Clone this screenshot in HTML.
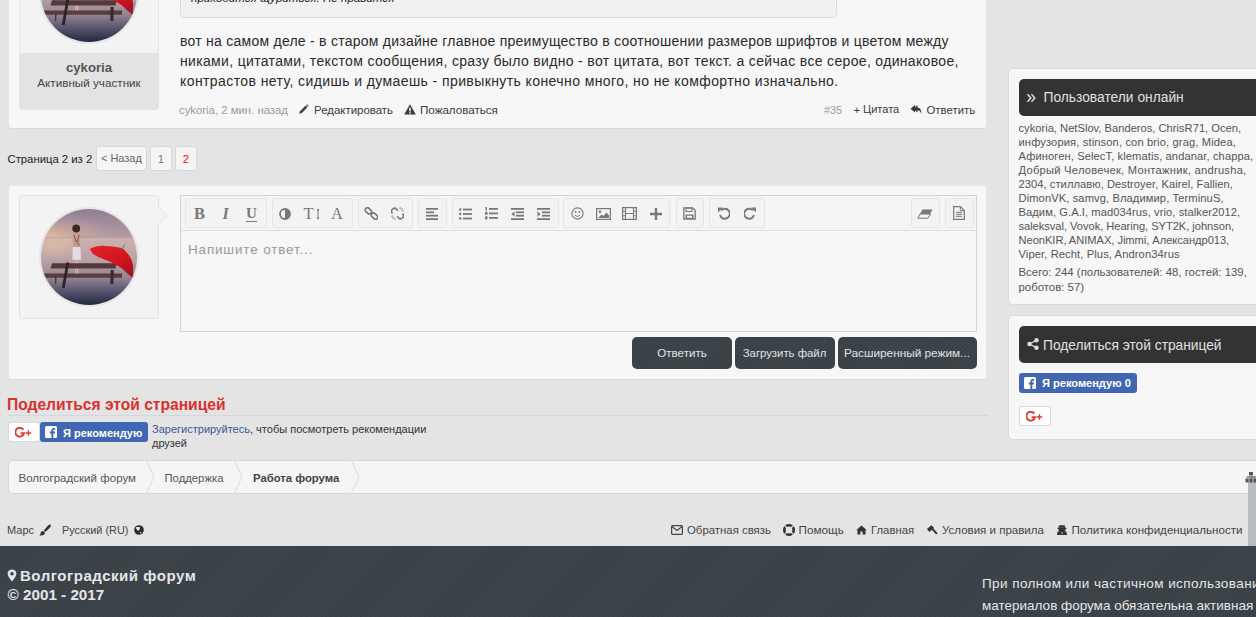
<!DOCTYPE html>
<html><head><meta charset="utf-8">
<style>
*{box-sizing:border-box;margin:0;padding:0}
html,body{width:1256px;height:617px;overflow:hidden;background:#e4e4e4;font-family:"Liberation Sans",sans-serif;color:#222;position:relative}
.a{position:absolute;white-space:nowrap}
</style></head><body>
<div class="a" style="left:8px;top:-10px;width:979px;height:139px;background:#f7f7f7;border-radius:0 0 4px 4px;border:1px solid #e3e3e3;border-top:none;border-bottom-color:#dadada"></div>
<div class="a" style="left:19px;top:-10px;width:140px;height:63px;background:#f3f3f3;border:1px solid #e6e6e6;border-bottom:none;border-radius:4px 4px 0 0"></div>
<div class="a" style="left:19px;top:53px;width:140px;height:57px;background:#e3e3e3;border-radius:0 0 4px 4px"></div>
<div class="a" style="left:19px;top:59.88px;font-size:13.2px;line-height:16.5px;color:#555;font-weight:700;text-align:center;width:140px">cykoria</div>
<div class="a" style="left:19px;top:75.64px;font-size:11.7px;line-height:14.62px;color:#444;text-align:center;width:140px">Активный участник</div>
<div class="a" style="left:180px;top:-10px;width:657px;height:28px;background:#f1f1f1;border:1px solid #dcdcdc;border-top:none;border-radius:0 0 5px 5px"></div>
<div class="a" style="left:191px;top:-8.87px;font-size:11.6px;line-height:14.5px;color:#222;font-style:italic">приходится щуриться. Не нравится</div>
<div class="a" style="left:180px;top:32.90px;font-size:14px;line-height:17.5px;color:#2a2a2a;letter-spacing:0.252px">вот на самом деле - в старом дизайне главное преимущество в соотношении размеров шрифтов и цветом между</div>
<div class="a" style="left:180px;top:52.90px;font-size:14px;line-height:17.5px;color:#2a2a2a;letter-spacing:0.335px">никами, цитатами, текстом сообщения, сразу было видно - вот цитата, вот текст. а сейчас все серое, одинаковое,</div>
<div class="a" style="left:180px;top:72.90px;font-size:14px;line-height:17.5px;color:#2a2a2a;letter-spacing:0.408px">контрастов нету, сидишь и думаешь - привыкнуть конечно много, но не комфортно изначально.</div>
<div class="a" style="left:179px;top:102.77px;font-size:11.35px;line-height:14.19px;color:#9a9a9a">cykoria, 2 мин. назад</div>
<div class="a" style="left:314px;top:102.68px;font-size:11.45px;line-height:14.31px;color:#3a3a3a">Редактировать</div>
<div class="a" style="left:420px;top:102.53px;font-size:11.6px;line-height:14.5px;color:#3a3a3a">Пожаловаться</div>
<div class="a" style="left:824px;top:103.81px;font-size:10.9px;line-height:13.62px;color:#9a9a9a">#35</div>
<div class="a" style="left:853.5px;top:102.72px;font-size:11.4px;line-height:14.25px;color:#3a3a3a">+</div>
<div class="a" style="left:863px;top:103.05px;font-size:11.06px;line-height:13.83px;color:#3a3a3a">Цитата</div>
<div class="a" style="left:926.5px;top:102.73px;font-size:11.39px;line-height:14.24px;color:#3a3a3a">Ответить</div>
<svg class="a" style="left:298px;top:104px" width="11" height="11" viewBox="0 0 11 11"><path d="M1.2 9.8 L1.8 7.4 L7.6 1.6 L9.4 3.4 L3.6 9.2 Z" fill="#444"/><path d="M8.2 1 L9 .2 L10.8 2 L10 2.8Z" fill="#444"/></svg>
<svg class="a" style="left:404px;top:104px" width="12" height="11" viewBox="0 0 12 11"><path d="M6 .3 L11.8 10.6 L.2 10.6 Z" fill="#3a3a3a"/><rect x="5.2" y="3.6" width="1.6" height="3.8" fill="#f6f6f6"/><rect x="5.2" y="8.3" width="1.6" height="1.4" fill="#f6f6f6"/></svg>
<svg class="a" style="left:910px;top:104px" width="12" height="11" viewBox="0 0 12 11"><path d="M5 1 L0.5 4.8 L5 8.6 Z" fill="#3a3a3a"/><path d="M7.5 1 L3 4.8 L7.5 8.6 L7.5 6.2 C9.5 6.2 10.8 7.5 11.3 10.3 C11.8 6 10 3.5 7.5 3.4Z" fill="#3a3a3a"/></svg>
<div class="a" style="left:7.5px;top:151.92px;font-size:11.3px;line-height:14.12px;color:#222">Страница 2 из 2</div>
<div class="a" style="left:96px;top:146px;width:51px;height:25px;background:#f5f5f5;border:1px solid #d8d8d8;border-radius:3px"></div>
<div class="a" style="left:150px;top:146px;width:22px;height:25px;background:#f5f5f5;border:1px solid #d8d8d8;border-radius:3px"></div>
<div class="a" style="left:175px;top:146px;width:22px;height:25px;background:#f5f5f5;border:1px solid #d8d8d8;border-radius:3px"></div>
<div class="a" style="left:101px;top:152.26px;font-size:10.95px;line-height:13.69px;color:#666">&lt; Назад</div>
<div class="a" style="left:150px;top:151.92px;font-size:11.3px;line-height:14.12px;color:#777;text-align:center;width:22px">1</div>
<div class="a" style="left:175px;top:151.92px;font-size:11.3px;line-height:14.12px;color:#f01010;text-align:center;width:22px">2</div>
<div class="a" style="left:8px;top:185px;width:979px;height:195px;background:#f7f7f7;border-radius:4px;border:1px solid #e8e8e8;border-bottom-color:#dadada"></div>
<div class="a" style="left:19px;top:195px;width:140px;height:124px;background:#f3f3f3;border:1px solid #e2e2e2;border-radius:4px"></div>
<svg class="a" style="left:158px;top:206px" width="10" height="20" viewBox="0 0 10 20"><path d="M0 0 L9 9.5 L0 19" fill="#f3f3f3" stroke="#e2e2e2" stroke-width="1"/><rect x="0" y="1" width="1" height="17" fill="#f3f3f3"/></svg>
<svg class="a" style="left:39px;top:207px" width="100" height="100" viewBox="0 0 100 100"><defs>
<linearGradient id="sky" x1="0" y1="0" x2="0" y2="1"><stop offset="0" stop-color="#8c7b8f"/><stop offset="1" stop-color="#b79da6"/></linearGradient>
<radialGradient id="skyw" cx="0.05" cy="0.95" r="0.9"><stop offset="0" stop-color="#e2bb98" stop-opacity="0.95"/><stop offset="0.6" stop-color="#c9a6a0" stop-opacity="0.35"/><stop offset="1" stop-color="#8e7a90" stop-opacity="0"/></radialGradient>
<linearGradient id="sea" x1="0" y1="0" x2="0" y2="1"><stop offset="0" stop-color="#cdb2ad"/><stop offset="0.35" stop-color="#b9a0a6"/><stop offset="0.6" stop-color="#8e8090"/><stop offset="0.75" stop-color="#5e5a72"/><stop offset="0.88" stop-color="#3a3c55"/><stop offset="1" stop-color="#1e2238"/></linearGradient>
<linearGradient id="umb" x1="0" y1="0" x2="1" y2="1"><stop offset="0" stop-color="#e0242a"/><stop offset="0.6" stop-color="#d0141c"/><stop offset="1" stop-color="#9c1020"/></linearGradient>
<radialGradient id="glow"><stop offset="0" stop-color="#e0c0a6" stop-opacity="0.7"/><stop offset="1" stop-color="#e0c0a6" stop-opacity="0"/></radialGradient>
<clipPath id="cc"><circle cx="50" cy="50" r="48"/></clipPath>
</defs>
<circle cx="50" cy="50" r="50" fill="#e6e6e6"/>
<g clip-path="url(#cc)">
<rect x="0" y="0" width="100" height="31" fill="url(#sky)"/>
<rect x="0" y="0" width="100" height="31" fill="url(#skyw)"/>
<rect x="0" y="30" width="100" height="70" fill="url(#sea)"/>
<rect x="0" y="30" width="100" height="0.8" fill="#a08c96" opacity="0.7"/>
<ellipse cx="15" cy="38" rx="30" ry="14" fill="url(#glow)"/>
<circle cx="37.2" cy="21.5" r="3.9" fill="#3e2626"/>
<path d="M34.2 26 L40.6 26 L41.2 40.2 L33.8 40.2 Z" fill="#c49c8e"/><path d="M34.6 28 L37.5 35 L40.5 38.5 M40.4 28 L38 35" stroke="#7a5050" stroke-width="0.9" fill="none"/>
<path d="M33.8 40 L41.4 40 L42 52.7 L33.4 52.7 Z" fill="#e2dbe8"/>
<rect x="36" y="53.5" width="1.3" height="15" fill="#cdb8b0"/><rect x="38" y="53.5" width="1.3" height="15" fill="#cdb8b0"/>
<path d="M13 56.2 L77.5 56.2 L76.5 61.5 L11.5 61.5 Z" fill="#55393a"/>
<path d="M5 66.6 L83 66.6 L83 70.8 L5 70.8 Z" fill="#573d3e"/>
<path d="M27.4 55.5 L30.2 55.5 L25.6 81 L22.8 81 Z" fill="#2e2224"/>
<path d="M71.5 63 L74.8 63 L74.5 77 L71.3 77 Z" fill="#3a2c2e"/>
<path d="M16 70 L17.5 70 L17.2 77 L16 77Z" fill="#46363a"/>
<path d="M50.7 42.1 C56 39.5 60 38.6 65.3 38.9 C72 39.2 76 39.6 79.9 40.4 C84 41.3 86 43 86.7 44.5 C90 48 92 51 92.6 53.3 C93.5 56 94.2 58 94.2 60.1 L93.8 71.5 C92 69 90 67.5 87.7 66 C85 63 83 61 79.9 59.5 C74 56 70 54 65.3 52.4 C60 50.5 56 48.5 53.6 46.5 Z" fill="url(#umb)"/>
<path d="M82.8 42.6 L85.7 37.7" stroke="#7a6868" stroke-width="0.9"/>
</g></svg>
<div class="a" style="left:180px;top:195px;width:797px;height:137px;background:#f7f7f7;border:1px solid #d4d4d4"></div>
<div class="a" style="left:181px;top:196px;width:795px;height:35px;background:#f4f4f4;border-bottom:1px solid #e0e0e0"></div>
<div class="a" style="left:185px;top:198px;width:81.5px;height:29.5px;background:#f3f3f3;border:1px solid #e6e6e6;border-radius:3px"></div>
<div class="a" style="left:271.5px;top:198px;width:81px;height:29.5px;background:#f3f3f3;border:1px solid #e6e6e6;border-radius:3px"></div>
<div class="a" style="left:357.5px;top:198px;width:55px;height:29.5px;background:#f3f3f3;border:1px solid #e6e6e6;border-radius:3px"></div>
<div class="a" style="left:417.5px;top:198px;width:29px;height:29.5px;background:#f3f3f3;border:1px solid #e6e6e6;border-radius:3px"></div>
<div class="a" style="left:451.5px;top:198px;width:107px;height:29.5px;background:#f3f3f3;border:1px solid #e6e6e6;border-radius:3px"></div>
<div class="a" style="left:563px;top:198px;width:107px;height:29.5px;background:#f3f3f3;border:1px solid #e6e6e6;border-radius:3px"></div>
<div class="a" style="left:675.5px;top:198px;width:28.5px;height:29.5px;background:#f3f3f3;border:1px solid #e6e6e6;border-radius:3px"></div>
<div class="a" style="left:709px;top:198px;width:56px;height:29.5px;background:#f3f3f3;border:1px solid #e6e6e6;border-radius:3px"></div>
<div class="a" style="left:910.5px;top:198px;width:29px;height:29.5px;background:#f3f3f3;border:1px solid #e6e6e6;border-radius:3px"></div>
<div class="a" style="left:944.5px;top:198px;width:29.5px;height:29.5px;background:#f3f3f3;border:1px solid #e6e6e6;border-radius:3px"></div>
<div class="a" style="left:188px;top:241.98px;font-size:13.4px;line-height:16.75px;color:#999;letter-spacing:0.88px">Напишите ответ...</div>
<div class="a" style="left:632px;top:337px;width:100px;height:32px;background:#3d454b repeating-linear-gradient(135deg,rgba(0,0,0,0.09) 0 1px,transparent 1px 3.5px);border-radius:5px"></div>
<div class="a" style="left:735px;top:337px;width:100px;height:32px;background:#3d454b repeating-linear-gradient(135deg,rgba(0,0,0,0.09) 0 1px,transparent 1px 3.5px);border-radius:5px"></div>
<div class="a" style="left:838px;top:337px;width:139px;height:32px;background:#3d454b repeating-linear-gradient(135deg,rgba(0,0,0,0.09) 0 1px,transparent 1px 3.5px);border-radius:5px"></div>
<div class="a" style="left:632px;top:346.15px;font-size:11.58px;line-height:14.47px;color:#e2e2e2;text-align:center;width:100px">Ответить</div>
<div class="a" style="left:735px;top:346.37px;font-size:11.35px;line-height:14.19px;color:#e2e2e2;text-align:center;width:99px">Загрузить файл</div>
<div class="a" style="left:838px;top:345.94px;font-size:11.8px;line-height:14.75px;color:#e2e2e2;text-align:center;width:138px">Расширенный режим...</div>
<div class="a" style="left:7px;top:394.64px;font-size:15.6px;line-height:19.5px;color:#d9302c;font-weight:700">Поделиться этой страницей</div>
<div class="a" style="left:8px;top:415px;width:980px;height:1px;background:#d6d6d6"></div>
<div class="a" style="left:8px;top:422px;width:32px;height:20px;background:#fff;border:1px solid #d9d9d9;border-radius:2px"></div>
<svg class="a" style="left:14.5px;top:426.8px" width="17" height="12" viewBox="0 0 17 12"><path d="M8.3 2.6 A4.4 4.4 0 1 0 9 6.2 H5.6" fill="none" stroke="#dc3f2f" stroke-width="1.9"/><path d="M13.4 3.2 V8.8 M10.6 6 H16.2" stroke="#dc3f2f" stroke-width="1.5"/></svg>
<div class="a" style="left:40px;top:422px;width:108px;height:20px;background:#4267b2;border-radius:3px"></div>
<svg class="a" style="left:45px;top:426px" width="12" height="12" viewBox="0 0 12 12"><rect width="12" height="12" rx="1.5" fill="#fff"/><path d="M8.3 12 V7.4 H9.9 L10.1 5.6 H8.3 V4.5 C8.3 4 8.5 3.7 9.2 3.7 H10.2 V2.1 C10 2.1 9.4 2 8.7 2 C7.3 2 6.4 2.9 6.4 4.4 V5.6 H4.8 V7.4 H6.4 V12Z" fill="#4267b2"/></svg>
<div class="a" style="left:63px;top:426.90px;font-size:11.02px;line-height:13.77px;color:#fff;font-weight:700">Я рекомендую</div>
<div class="a" style="left:152px;top:422.90px;font-size:11.02px;line-height:13.77px;color:#333"><span style="color:#365899">Зарегистрируйтесь</span>, чтобы посмотреть рекомендации</div>
<div class="a" style="left:152px;top:436.65px;font-size:10.96px;line-height:13.7px;color:#333">друзей</div>
<div class="a" style="left:8px;top:460px;width:1260px;height:34px;background:#f5f5f5;border:1px solid #d7d7d7;border-radius:5px"></div>
<div class="a" style="left:18.5px;top:470.98px;font-size:11.55px;line-height:14.44px;color:#555">Волгоградский форум</div>
<div class="a" style="left:164.5px;top:471.21px;font-size:11.31px;line-height:14.14px;color:#555">Поддержка</div>
<div class="a" style="left:253px;top:470.51px;font-size:11.31px;line-height:14.14px;color:#444;font-weight:700">Работа форума</div>
<svg class="a" style="left:146px;top:461px" width="9" height="32" viewBox="0 0 9 32"><path d="M0.5 0 L8 16 L0.5 32" stroke="#dadada" stroke-width="1" fill="none"/></svg>
<svg class="a" style="left:234px;top:461px" width="9" height="32" viewBox="0 0 9 32"><path d="M0.5 0 L8 16 L0.5 32" stroke="#dadada" stroke-width="1" fill="none"/></svg>
<svg class="a" style="left:350.5px;top:461px" width="9" height="32" viewBox="0 0 9 32"><path d="M0.5 0 L8 16 L0.5 32" stroke="#dadada" stroke-width="1" fill="none"/></svg>
<div class="a" style="left:7px;top:524.31px;font-size:11.0px;line-height:13.75px;color:#444">Марс</div>
<div class="a" style="left:62px;top:523.51px;font-size:10.9px;line-height:13.62px;color:#444">Русский (RU)</div>
<div class="a" style="left:687px;top:523.02px;font-size:11.4px;line-height:14.25px;color:#444">Обратная связь</div>
<div class="a" style="left:798.5px;top:522.68px;font-size:11.75px;line-height:14.69px;color:#444">Помощь</div>
<div class="a" style="left:871px;top:523.07px;font-size:11.35px;line-height:14.19px;color:#444">Главная</div>
<div class="a" style="left:942px;top:522.90px;font-size:11.53px;line-height:14.41px;color:#444">Условия и правила</div>
<div class="a" style="left:1071.5px;top:522.83px;font-size:11.6px;line-height:14.5px;color:#444">Политика конфиденциальности</div>
<svg class="a" style="left:39px;top:524px" width="12" height="12" viewBox="0 0 12 12"><path d="M11.6 .6 C10.8 .2 9.6 1 8.4 2.2 L4.8 6.4 L6.4 8 L10.4 4.2 C11.6 3 12.2 1.4 11.6 .6Z" fill="#333"/><path d="M4.2 7 C2.6 7 1.6 8.2 1.5 9.4 C1.4 10.4 1 10.9 .2 11.3 C3 12.2 6 11 6 8.8Z" fill="#333"/></svg>
<svg class="a" style="left:134px;top:525px" width="10" height="10" viewBox="0 0 10 10"><circle cx="5" cy="5" r="4.8" fill="#2a2a2a"/><path d="M2 2.2 C3 1.6 4 2.4 4.6 2 C5.4 1.6 6 2.2 5.9 3.2 C5.8 4.4 5 5.6 4.4 6 C3.6 5.4 2.4 4.2 1.8 3.2Z" fill="#e4e4e4"/><path d="M6.2 7 C7 6.8 7.6 7.2 7.4 8 C7 8.6 6.4 8.6 6 8.2Z" fill="#e4e4e4"/></svg>
<svg class="a" style="left:671px;top:525px" width="12" height="10" viewBox="0 0 12 10"><rect x=".6" y=".6" width="10.8" height="8.8" rx="1" fill="none" stroke="#444" stroke-width="1.2"/><path d="M1 1.5 L6 5.5 L11 1.5" fill="none" stroke="#444" stroke-width="1.2"/></svg>
<svg class="a" style="left:783px;top:524px" width="12" height="12" viewBox="0 0 12 12"><circle cx="6" cy="6" r="4.6" fill="none" stroke="#333" stroke-width="2.4"/><circle cx="6" cy="6" r="5.6" fill="none" stroke="#333" stroke-width=".8"/><path d="M2 2 L4 4 M10 2 L8 4 M2 10 L4 8 M10 10 L8 8" stroke="#e4e4e4" stroke-width="1.2"/></svg>
<svg class="a" style="left:856px;top:525px" width="11" height="10" viewBox="0 0 11 10"><path d="M5.5 .5 L10.8 5.2 L9.5 5.2 L9.5 9.5 L6.6 9.5 L6.6 6.5 L4.4 6.5 L4.4 9.5 L1.5 9.5 L1.5 5.2 L.2 5.2 Z" fill="#333"/></svg>
<svg class="a" style="left:922px;top:520px" width="20" height="20" viewBox="0 0 20 20"><path d="M4.9 9.1 L9.4 5.2 L12 7.8 L7.5 12Z" fill="#333"/><path d="M9.6 9.4 L11 8.1 L15.6 13.3 L14.2 14.6Z" fill="#333"/></svg>
<svg class="a" style="left:1052px;top:520px" width="20" height="20" viewBox="0 0 20 20"><path d="M7 5.2 L12.8 5.2 L13.2 7.8 L6.6 7.8Z" fill="#333"/><rect x="5.6" y="7.6" width="8.8" height="1.4" fill="#333"/><path d="M6.6 9 H13.4 V11 C13.4 11.5 12.5 12 10 12 C7.5 12 6.6 11.5 6.6 11Z" fill="#333"/><path d="M5 14.9 L5.6 11.5 L14.4 11.5 L15 14.9Z" fill="#333"/><path d="M9.2 12 L10.8 12 L10.5 14.6 L9.5 14.6Z" fill="#9a9a9a"/></svg>
<div class="a" style="left:1248px;top:476px;width:12px;height:70px;background:#b8bdc1;border-radius:4px 0 0 0"></div>
<svg class="a" style="left:1245px;top:472px" width="11" height="12" viewBox="0 0 11 12"><rect x="4" y="0" width="4" height="3.5" fill="#555"/><rect x="0.5" y="6.5" width="3" height="4" fill="#555"/><rect x="4.5" y="6.5" width="3" height="4" fill="#555"/><rect x="8.5" y="6.5" width="3" height="4" fill="#555"/><rect x="1.5" y="4.5" width="9" height="1" fill="#555"/></svg>
<div class="a" style="left:0px;top:546px;width:1256px;height:71px;background:#3d454b repeating-linear-gradient(135deg,rgba(0,0,0,0.09) 0 1px,transparent 1px 3.5px)"></div>
<div class="a" style="left:20px;top:566.83px;font-size:15px;line-height:18.75px;color:#e6e6e6;font-weight:700;letter-spacing:0.53px">Волгоградский форум</div>
<div class="a" style="left:7.5px;top:584.79px;font-size:15.24px;line-height:19.05px;color:#e6e6e6;font-weight:700">© 2001 - 2017</div>
<svg class="a" style="left:7px;top:569px" width="10" height="13" viewBox="0 0 10 13"><path d="M5 0.5 C2.5 .5 .6 2.4 .6 4.8 C.6 7.5 5 12.5 5 12.5 C5 12.5 9.4 7.5 9.4 4.8 C9.4 2.4 7.5 .5 5 .5Z" fill="#e6e6e6"/><circle cx="5" cy="4.7" r="1.8" fill="#3d4247"/></svg>
<div class="a" style="left:982px;top:576.18px;font-size:13.5px;line-height:16.88px;color:#e6e6e6;letter-spacing:0.42px">При полном или частичном использовании</div>
<div class="a" style="left:982px;top:597.78px;font-size:13.5px;line-height:16.88px;color:#e6e6e6">материалов форума обязательна активная</div>
<div class="a" style="left:1008px;top:68px;width:260px;height:237px;background:#f7f7f7;border:1px solid #dadada;border-radius:5px"></div>
<div class="a" style="left:1019px;top:79px;width:250px;height:36.5px;background:#333;border-radius:5px"></div>
<svg class="a" style="left:1026px;top:94px" width="10" height="8" viewBox="0 0 10 8"><path d="M.5 .3 L3.8 4 L.5 7.7 L2.5 7.7 L5.8 4 L2.5 .3Z M4.5 .3 L7.8 4 L4.5 7.7 L6.5 7.7 L9.8 4 L6.5 .3Z" fill="#ddd"/></svg>
<div class="a" style="left:1043.5px;top:88.69px;font-size:13.8px;line-height:17.25px;color:#e0e0e0">Пользователи онлайн</div>
<div class="a" style="left:1018.5px;top:121.77px;font-size:11.15px;line-height:13.94px;color:#555;letter-spacing:0.012px">cykoria, NetSlov, Banderos, ChrisR71, Ocen,</div>
<div class="a" style="left:1018.5px;top:135.77px;font-size:11.15px;line-height:13.94px;color:#555;letter-spacing:0.129px">инфузория, stinson, con brio, grag, Midea,</div>
<div class="a" style="left:1018.5px;top:149.77px;font-size:11.15px;line-height:13.94px;color:#555;letter-spacing:0.098px">Афиноген, SelecT, klematis, andanar, chappa,</div>
<div class="a" style="left:1018.5px;top:163.77px;font-size:11.15px;line-height:13.94px;color:#555;letter-spacing:0.265px">Добрый Человечек, Монтажник, andrusha,</div>
<div class="a" style="left:1018.5px;top:177.77px;font-size:11.15px;line-height:13.94px;color:#555;letter-spacing:0.057px">2304, стиллавю, Destroyer, Kairel, Fallien,</div>
<div class="a" style="left:1018.5px;top:191.77px;font-size:11.15px;line-height:13.94px;color:#555;letter-spacing:0.103px">DimonVK, samvg, Владимир, TerminuS,</div>
<div class="a" style="left:1018.5px;top:205.77px;font-size:11.15px;line-height:13.94px;color:#555;letter-spacing:0.074px">Вадим, G.A.I, mad034rus, vrio, stalker2012,</div>
<div class="a" style="left:1018.5px;top:219.77px;font-size:11.15px;line-height:13.94px;color:#555;letter-spacing:-0.041px">saleksval, Vovok, Hearing, SYT2K, johnson,</div>
<div class="a" style="left:1018.5px;top:233.77px;font-size:11.15px;line-height:13.94px;color:#555;letter-spacing:-0.047px">NeonKIR, ANIMAX, Jimmi, Александр013,</div>
<div class="a" style="left:1018.5px;top:247.77px;font-size:11.15px;line-height:13.94px;color:#555;letter-spacing:0.11px">Viper, Recht, Plus, Andron34rus</div>
<div class="a" style="left:1018.5px;top:265.42px;font-size:11.4px;line-height:14.25px;color:#555">Всего: 244 (пользователей: 48, гостей: 139,</div>
<div class="a" style="left:1018.5px;top:279.72px;font-size:11.4px;line-height:14.25px;color:#555">роботов: 57)</div>
<div class="a" style="left:1008px;top:315px;width:260px;height:125px;background:#f7f7f7;border:1px solid #dadada;border-radius:5px"></div>
<div class="a" style="left:1019px;top:326px;width:250px;height:36.5px;background:#333;border-radius:5px"></div>
<svg class="a" style="left:1027px;top:338px" width="12" height="12" viewBox="0 0 12 12"><circle cx="9.5" cy="2.3" r="2.2" fill="#ddd"/><circle cx="2.5" cy="6" r="2.2" fill="#ddd"/><circle cx="9.5" cy="9.7" r="2.2" fill="#ddd"/><path d="M9.5 2.3 L2.5 6 L9.5 9.7" stroke="#ddd" stroke-width="1.3" fill="none"/></svg>
<div class="a" style="left:1043px;top:336.64px;font-size:13.75px;line-height:17.19px;color:#e0e0e0">Поделиться этой страницей</div>
<div class="a" style="left:1019px;top:373px;width:118px;height:20px;background:#4267b2;border-radius:3px"></div>
<svg class="a" style="left:1023.5px;top:377px" width="12" height="12" viewBox="0 0 12 12"><rect width="12" height="12" rx="1.5" fill="#fff"/><path d="M8.3 12 V7.4 H9.9 L10.1 5.6 H8.3 V4.5 C8.3 4 8.5 3.7 9.2 3.7 H10.2 V2.1 C10 2.1 9.4 2 8.7 2 C7.3 2 6.4 2.9 6.4 4.4 V5.6 H4.8 V7.4 H6.4 V12Z" fill="#4267b2"/></svg>
<div class="a" style="left:1042px;top:377.15px;font-size:11.06px;line-height:13.83px;color:#fff;font-weight:700">Я рекомендую 0</div>
<div class="a" style="left:1019px;top:406px;width:32px;height:20px;background:#fff;border:1px solid #d9d9d9;border-radius:2px"></div>
<svg class="a" style="left:1025.5px;top:410.5px" width="17" height="12" viewBox="0 0 17 12"><path d="M8.3 2.6 A4.4 4.4 0 1 0 9 6.2 H5.6" fill="none" stroke="#dc3f2f" stroke-width="1.9"/><path d="M13.4 3.2 V8.8 M10.6 6 H16.2" stroke="#dc3f2f" stroke-width="1.5"/></svg>
<div class="a" style="left:193.5px;top:203.97px;font-size:16.5px;line-height:20.62px;color:#787878;font-weight:700;font-family:'Liberation Serif',serif;width:12px;text-align:center">B</div>
<div class="a" style="left:219.5px;top:204.26px;font-size:16px;line-height:20.0px;color:#787878;font-weight:700;font-style:italic;font-family:'Liberation Serif',serif;width:12px;text-align:center">I</div>
<div class="a" style="left:245.5px;top:203.93px;font-size:15px;line-height:18.75px;color:#787878;font-weight:700;font-family:'Liberation Serif',serif;width:12px;text-align:center">U</div>
<div class="a" style="left:246px;top:221px;width:11px;height:1.2px;background:#787878"></div>
<svg class="a" style="left:279.0px;top:208px" width="12" height="12" viewBox="0 0 12 12"><circle cx="6" cy="6" r="5" fill="none" stroke="#787878" stroke-width="1.8"/><path d="M6 1 A5 5 0 0 1 6 11Z" fill="#787878"/></svg>
<div class="a" style="left:303.5px;top:204.17px;font-size:16.5px;line-height:20.62px;color:#787878;font-family:'Liberation Serif',serif">T</div>
<svg class="a" style="left:315.5px;top:208px" width="4" height="12" viewBox="0 0 4 12"><path d="M2 1 V11" stroke="#787878" stroke-width="1"/><path d="M0.6 2.6 L2 0.4 L3.4 2.6Z M0.6 9.4 L2 11.6 L3.4 9.4Z" fill="#787878"/></svg>
<div class="a" style="left:331px;top:204.17px;font-size:16.5px;line-height:20.62px;color:#787878;font-family:'Liberation Serif',serif">A</div>
<svg class="a" style="left:364.0px;top:207px" width="14" height="13" viewBox="0 0 14 13"><g fill="none" stroke="#787878" stroke-width="1.6"><rect x="0.9" y="1.6" width="7" height="4.4" rx="2.2" transform="rotate(42 4.4 3.8)"/><rect x="7" y="6.9" width="7" height="4.4" rx="2.2" transform="rotate(42 10.5 9.1)"/></g></svg>
<svg class="a" style="left:390.5px;top:207px" width="13" height="13" viewBox="0 0 13 13"><g fill="none" stroke="#787878" stroke-width="1.6"><path d="M1.6 6.4 L0.9 5.6 C0.1 4.8 0.3 3.2 1.3 2.4 L2.3 1.6 C3.1 1 4.4 1.1 5.1 1.9 L6.8 3.8"/><path d="M11.4 6.6 L12.1 7.4 C12.9 8.2 12.7 9.8 11.7 10.6 L10.7 11.4 C9.9 12 8.6 11.9 7.9 11.1 L6.2 9.2"/></g><g stroke="#787878" stroke-width="0.9"><path d="M9.2 0.2 V2.4 M12.8 3.8 H10.6 M11.8 1.2 L10.3 2.7 M0.2 9.2 H2.4 M3.8 12.8 V10.6 M1.2 11.8 L2.7 10.3"/></g></svg>
<svg class="a" style="left:425.5px;top:208px" width="12" height="12" viewBox="0 0 12 12"><g fill="#787878"><rect x="0" y="0" width="12" height="1.8"/><rect x="0" y="3.4" width="8" height="1.8"/><rect x="0" y="6.8" width="12" height="1.8"/><rect x="0" y="10.2" width="12" height="1.8"/></g></svg>
<svg class="a" style="left:459.0px;top:208px" width="13" height="12" viewBox="0 0 13 12"><g fill="#787878"><circle cx="1.2" cy="1.5" r="1.2"/><circle cx="1.2" cy="6" r="1.2"/><circle cx="1.2" cy="10.5" r="1.2"/><rect x="4" y=".6" width="9" height="1.8"/><rect x="4" y="5.1" width="9" height="1.8"/><rect x="4" y="9.6" width="9" height="1.8"/></g></svg>
<svg class="a" style="left:485.0px;top:207px" width="13" height="13" viewBox="0 0 13 13"><g fill="#787878"><rect x="4" y="1" width="9" height="1.8"/><rect x="4" y="5.5" width="9" height="1.8"/><rect x="4" y="10" width="9" height="1.8"/><rect x=".5" y="0" width="1.5" height="3.5"/><rect x="0" y="4.8" width="2.5" height="3"/><rect x="0" y="9.3" width="2.5" height="3"/></g></svg>
<svg class="a" style="left:511.0px;top:208px" width="13" height="12" viewBox="0 0 13 12"><g fill="#787878"><rect x="0" y="0" width="13" height="1.8"/><rect x="5" y="3.4" width="8" height="1.8"/><rect x="5" y="6.8" width="8" height="1.8"/><rect x="0" y="10.2" width="13" height="1.8"/><path d="M3.5 3.2 L0.5 6 L3.5 8.8Z"/></g></svg>
<svg class="a" style="left:537.0px;top:208px" width="13" height="12" viewBox="0 0 13 12"><g fill="#787878"><rect x="0" y="0" width="13" height="1.8"/><rect x="5" y="3.4" width="8" height="1.8"/><rect x="5" y="6.8" width="8" height="1.8"/><rect x="0" y="10.2" width="13" height="1.8"/><path d="M.5 3.2 L3.5 6 L.5 8.8Z"/></g></svg>
<svg class="a" style="left:570.5px;top:207px" width="13" height="13" viewBox="0 0 13 13"><circle cx="6.5" cy="6.5" r="5.6" fill="none" stroke="#787878" stroke-width="1.1"/><circle cx="4.6" cy="5" r=".9" fill="#787878"/><circle cx="8.4" cy="5" r=".9" fill="#787878"/><path d="M3.8 7.8 C5 9.8 8 9.8 9.2 7.8" fill="none" stroke="#787878" stroke-width="1"/></svg>
<svg class="a" style="left:596.0px;top:208px" width="15" height="12" viewBox="0 0 15 12"><rect x=".6" y=".6" width="13.8" height="10.8" fill="none" stroke="#787878" stroke-width="1.2"/><circle cx="4" cy="3.8" r="1.3" fill="#787878"/><path d="M2 10 L5.5 6.5 L7.5 8 L10.5 4.5 L13 7.5 V10Z" fill="#787878"/></svg>
<svg class="a" style="left:622.0px;top:207px" width="15" height="13" viewBox="0 0 15 13"><rect x=".6" y=".6" width="13.8" height="11.8" fill="none" stroke="#787878" stroke-width="1.2"/><path d="M3.5 .6 V12.4 M11.5 .6 V12.4 M.6 4.3 H3.5 M.6 8.7 H3.5 M11.5 4.3 H14.4 M11.5 8.7 H14.4 M3.5 6.5 H11.5" stroke="#787878" stroke-width="1.1"/></svg>
<svg class="a" style="left:649.5px;top:208px" width="12" height="12" viewBox="0 0 12 12"><path d="M4.8 0 H7.2 V4.8 H12 V7.2 H7.2 V12 H4.8 V7.2 H0 V4.8 H4.8Z" fill="#787878"/></svg>
<svg class="a" style="left:683.0px;top:207px" width="13" height="13" viewBox="0 0 13 13"><path d="M.8 .8 H9.5 L12.2 3.5 V12.2 H.8Z" fill="none" stroke="#787878" stroke-width="1.3"/><rect x="3" y="1" width="6" height="3.5" fill="none" stroke="#787878" stroke-width="1.1"/><rect x="2.5" y="7.5" width="8" height="4.5" fill="#787878"/><rect x="4" y="8.8" width="5" height="2" fill="#f3f3f3"/></svg>
<svg class="a" style="left:717.5px;top:207px" width="12" height="13" viewBox="0 0 12 13"><path d="M3 3.5 A5 5 0 1 1 2 8" fill="none" stroke="#787878" stroke-width="1.9"/><path d="M0 .5 L5 .5 L0 5.5Z" fill="#787878"/></svg>
<svg class="a" style="left:743.5px;top:207px" width="12" height="13" viewBox="0 0 12 13"><path d="M9 3.5 A5 5 0 1 0 10 8" fill="none" stroke="#787878" stroke-width="1.9"/><path d="M12 .5 L7 .5 L12 5.5Z" fill="#787878"/></svg>
<svg class="a" style="left:916.5px;top:209px" width="16" height="10" viewBox="0 0 16 10"><path d="M5.5 .5 H15.5 L11 8.5 H1Z" fill="#787878"/><path d="M3.2 5 H13.5 L11 9.2 H.8Z" fill="#f3f3f3" stroke="#787878" stroke-width="1"/></svg>
<svg class="a" style="left:952.5px;top:206px" width="12" height="14" viewBox="0 0 12 14"><path d="M.7 .7 H7.5 L11.3 4.5 V13.3 H.7Z" fill="none" stroke="#787878" stroke-width="1.2"/><path d="M7.3 .7 V4.7 H11.3" fill="none" stroke="#787878" stroke-width="1"/><path d="M3 6.3 H9 M3 8.3 H9 M3 10.3 H9" stroke="#787878" stroke-width="1"/></svg>
<svg class="a" style="left:39px;top:-56px" width="100" height="100" viewBox="0 0 100 100"><defs>
<linearGradient id="sky2" x1="0" y1="0" x2="0" y2="1"><stop offset="0" stop-color="#8c7b8f"/><stop offset="1" stop-color="#b79da6"/></linearGradient>
<radialGradient id="skyw2" cx="0.05" cy="0.95" r="0.9"><stop offset="0" stop-color="#e2bb98" stop-opacity="0.95"/><stop offset="0.6" stop-color="#c9a6a0" stop-opacity="0.35"/><stop offset="1" stop-color="#8e7a90" stop-opacity="0"/></radialGradient>
<linearGradient id="sea2" x1="0" y1="0" x2="0" y2="1"><stop offset="0" stop-color="#cdb2ad"/><stop offset="0.35" stop-color="#b9a0a6"/><stop offset="0.6" stop-color="#8e8090"/><stop offset="0.75" stop-color="#5e5a72"/><stop offset="0.88" stop-color="#3a3c55"/><stop offset="1" stop-color="#1e2238"/></linearGradient>
<linearGradient id="umb" x1="0" y1="0" x2="1" y2="1"><stop offset="0" stop-color="#e0242a"/><stop offset="0.6" stop-color="#d0141c"/><stop offset="1" stop-color="#9c1020"/></linearGradient>
<radialGradient id="glow2"><stop offset="0" stop-color="#e0c0a6" stop-opacity="0.7"/><stop offset="1" stop-color="#e0c0a6" stop-opacity="0"/></radialGradient>
<clipPath id="cc2"><circle cx="50" cy="50" r="48"/></clipPath>
</defs>
<circle cx="50" cy="50" r="50" fill="#e6e6e6"/>
<g clip-path="url(#cc2)">
<rect x="0" y="0" width="100" height="31" fill="url(#sky2)"/>
<rect x="0" y="0" width="100" height="31" fill="url(#skyw2)"/>
<rect x="0" y="30" width="100" height="70" fill="url(#sea2)"/>
<rect x="0" y="30" width="100" height="0.8" fill="#a08c96" opacity="0.7"/>
<ellipse cx="15" cy="38" rx="30" ry="14" fill="url(#glow2)"/>
<circle cx="37.2" cy="21.5" r="3.9" fill="#3e2626"/>
<path d="M34.2 26 L40.6 26 L41.2 40.2 L33.8 40.2 Z" fill="#c49c8e"/><path d="M34.6 28 L37.5 35 L40.5 38.5 M40.4 28 L38 35" stroke="#7a5050" stroke-width="0.9" fill="none"/>
<path d="M33.8 40 L41.4 40 L42 52.7 L33.4 52.7 Z" fill="#e2dbe8"/>
<rect x="36" y="53.5" width="1.3" height="15" fill="#cdb8b0"/><rect x="38" y="53.5" width="1.3" height="15" fill="#cdb8b0"/>
<path d="M13 56.2 L77.5 56.2 L76.5 61.5 L11.5 61.5 Z" fill="#55393a"/>
<path d="M5 66.6 L83 66.6 L83 70.8 L5 70.8 Z" fill="#573d3e"/>
<path d="M27.4 55.5 L30.2 55.5 L25.6 81 L22.8 81 Z" fill="#2e2224"/>
<path d="M71.5 63 L74.8 63 L74.5 77 L71.3 77 Z" fill="#3a2c2e"/>
<path d="M16 70 L17.5 70 L17.2 77 L16 77Z" fill="#46363a"/>
<path d="M50.7 42.1 C56 39.5 60 38.6 65.3 38.9 C72 39.2 76 39.6 79.9 40.4 C84 41.3 86 43 86.7 44.5 C90 48 92 51 92.6 53.3 C93.5 56 94.2 58 94.2 60.1 L93.8 71.5 C92 69 90 67.5 87.7 66 C85 63 83 61 79.9 59.5 C74 56 70 54 65.3 52.4 C60 50.5 56 48.5 53.6 46.5 Z" fill="url(#umb)"/>
<path d="M82.8 42.6 L85.7 37.7" stroke="#7a6868" stroke-width="0.9"/>
</g></svg>
</body></html>
